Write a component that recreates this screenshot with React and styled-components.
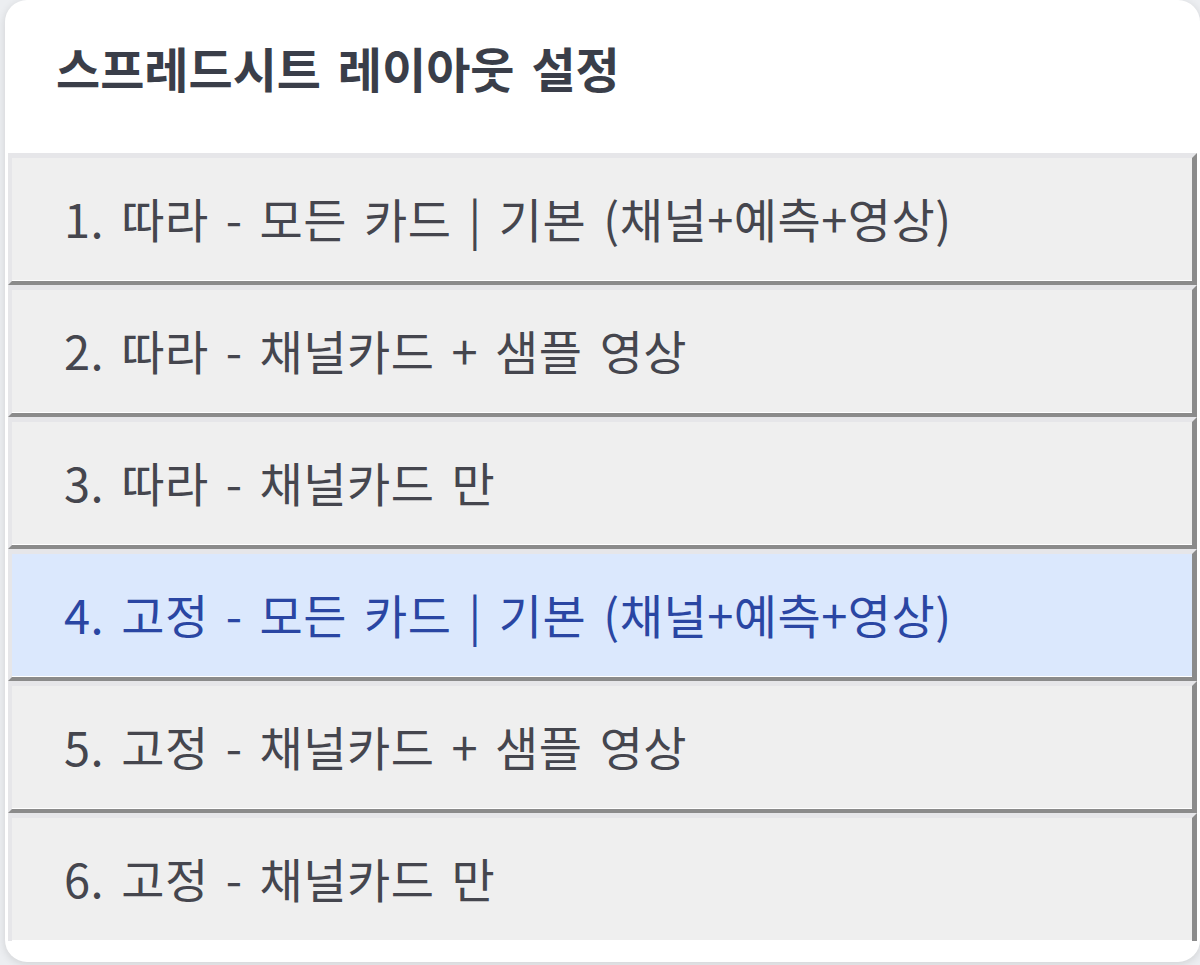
import React from 'react';
import styled, { createGlobalStyle } from 'styled-components';

const GlobalStyle = createGlobalStyle`
  html, body {
    margin: 0;
    padding: 0;
    background: #eceef1;
  }
  body {
    font-family: "Noto Sans CJK KR", "Noto Sans", sans-serif;
  }
`;

const Page = styled.div`
  width: 1200px;
  height: 965px;
  display: flex;
  padding: 0 0 0 5px;
  box-sizing: border-box;
`;

const Panel = styled.div`
  flex: 1;
  height: 962px;
  background: #ffffff;
  border-radius: 22px;
  display: flex;
  flex-direction: column;
  padding: 0 3px 21px 3px;
  box-sizing: border-box;
  overflow: hidden;
  box-shadow: 0 2px 8px rgba(0, 0, 0, 0.12);
`;

const Header = styled.div`
  height: 153px;
  flex-shrink: 0;
  display: flex;
  align-items: center;
  padding: 0 0 20px 48px;
  box-sizing: border-box;
`;

const Title = styled.h2`
  margin: 0;
  font-size: 48px;
  font-weight: 700;
  color: #3a3e49;
  letter-spacing: 0;
  word-spacing: 6px;
`;

const List = styled.div`
  flex: 1;
  display: flex;
  flex-direction: column;
  overflow: hidden;
`;

const Option = styled.button`
  flex-shrink: 0;
  height: 132px;
  box-sizing: border-box;
  display: flex;
  align-items: center;
  padding: 0 0 4px 52px;
  margin: 0;
  text-align: left;
  font-family: inherit;
  font-size: 47px;
  font-weight: 400;
  letter-spacing: 0.5px;
  word-spacing: 6px;
  cursor: pointer;
  background: ${(p) => (p.$active ? '#dbe8fd' : '#efefef')};
  color: ${(p) => (p.$active ? '#2a46a3' : '#45464e')};
  border-style: solid;
  border-width: 5px 5px 4px 4px;
  border-color: #e6e6e9 #8b8b8b #8b8b8b #e6e6e9;
  box-shadow: inset 0 -1px 0 #ffffff;
`;

const options = [
  '1. 따라 - 모든 카드 | 기본 (채널+예측+영상)',
  '2. 따라 - 채널카드 + 샘플 영상',
  '3. 따라 - 채널카드 만',
  '4. 고정 - 모든 카드 | 기본 (채널+예측+영상)',
  '5. 고정 - 채널카드 + 샘플 영상',
  '6. 고정 - 채널카드 만',
];

const App = () => {
  return (
    <>
      <GlobalStyle />
      <Page>
        <Panel>
          <Header>
            <Title>스프레드시트 레이아웃 설정</Title>
          </Header>
          <List>
            {options.map((label, i) => (
              <Option key={label} type={'button'} $active={i === 3}>
                {label}
              </Option>
            ))}
          </List>
        </Panel>
      </Page>
    </>
  );
};

export default App;
